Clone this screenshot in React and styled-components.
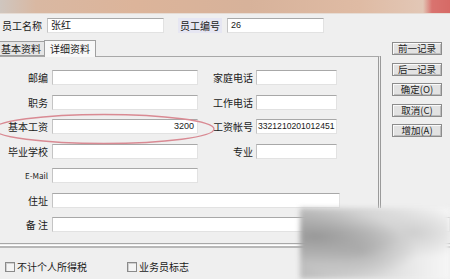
import React from "react";
import styled, { createGlobalStyle } from "styled-components";

const Global = createGlobalStyle`
  html, body { margin: 0; padding: 0; }
  body {
    background: #efefef;
    font-family: "Noto Sans CJK SC", "DejaVu Sans", sans-serif;
    font-size: 10px;
    color: #1a1a1a;
    overflow: hidden;
  }
`;

const Window = styled.div`
  position: relative;
  width: 450px;
  height: 279px;
  overflow: hidden;
  background: #efefef;
`;

const TitleBar = styled.div`
  height: 13px;
  background: linear-gradient(90deg, #cfc6bf 0%, #d9b8a2 8%, #dcb49a 30%, #d7b29a 55%, #dfbba4 80%, #e2c7b6 94%, #d9736f 96%, #d66a66 100%);
  border-bottom: 1px solid #e6dcd4;
  filter: blur(0.6px);
`;

const HeaderRow = styled.div`
  display: flex;
  align-items: center;
  height: 15px;
  margin-top: 4px;
  padding-left: 2px;
`;

const HeaderLabel = styled.span`
  line-height: 15px;
  margin-right: ${(p) => p.$gap || 4}px;
  margin-left: ${(p) => p.$left || 0}px;
  padding: 0 ${(p) => (p.$tint ? 2 : 0)}px;
  background: ${(p) => (p.$tint ? "#e6e6f2" : "transparent")};
  white-space: nowrap;
`;

const Field = styled.div`
  box-sizing: border-box;
  width: ${(p) => p.$w}px;
  height: 15px;
  background: #fff;
  border-top: 1px solid #a8a8a8;
  border-left: 1px solid #c4c4c4;
  border-right: 1px solid #e2e2e2;
  border-bottom: 1px solid #e2e2e2;
  font-family: "Liberation Sans", "Noto Sans CJK SC", sans-serif;
  font-size: ${(p) => p.$size || 10}px;
  line-height: 13px;
  padding: 0 ${(p) => (p.$tight ? 1 : 3)}px;
  text-align: ${(p) => (p.$right ? "right" : "left")};
  white-space: nowrap;
  overflow: hidden;
  flex-shrink: 0;
`;

const Main = styled.div`
  display: flex;
  margin-top: 6px;
`;

const Left = styled.div`
  width: 381px;
  flex-shrink: 0;
`;

const Tabs = styled.div`
  display: flex;
  align-items: flex-end;
  height: 17px;
  margin-left: -3px;
`;

const Tab = styled.div`
  box-sizing: border-box;
  height: ${(p) => (p.$active ? 17 : 15)}px;
  padding: 0 ${(p) => (p.$active ? 5 : 3)}px;
  line-height: ${(p) => (p.$active ? 15 : 13)}px;
  background: ${(p) => (p.$active ? "#f8f8f8" : "#e6e6e6")};
  border: 1px solid #a0a0a0;
  border-bottom: ${(p) => (p.$active ? "none" : "1px solid #a0a0a0")};
  margin-left: ${(p) => (p.$active ? -1 : 0)}px;
  margin-bottom: ${(p) => (p.$active ? -1 : 0)}px;
  position: relative;
  z-index: ${(p) => (p.$active ? 2 : 1)};
`;

const Panel = styled.div`
  box-sizing: border-box;
  height: 152px;
  border-top: 1px solid #a8a8a8;
  border-right: 3px double #9a9a9a;
  padding-top: 13px;
  display: flex;
  flex-direction: column;
  gap: 9.5px;
`;

const Row = styled.div`
  display: flex;
  align-items: center;
  height: 15px;
`;

const Label = styled.span`
  box-sizing: border-box;
  width: ${(p) => p.$w}px;
  padding-right: ${(p) => p.$pad ?? 4}px;
  text-align: right;
  white-space: nowrap;
  line-height: 15px;
  font-size: ${(p) => p.$size || 10}px;
  flex-shrink: 0;
`;

const Buttons = styled.div`
  display: flex;
  flex-direction: column;
  gap: 7.5px;
  padding-top: 3px;
  margin-left: 11px;
`;

const Button = styled.div`
  box-sizing: border-box;
  width: 50px;
  height: 13px;
  background: #e2e2e2;
  border: 1px solid #8c8c8c;
  box-shadow: inset 1px 1px 0 #fafafa, inset -1px -1px 0 #bdbdbd;
  font-size: 9.5px;
  line-height: 11px;
  text-align: center;
  color: #222;
`;

const NoteRow = styled(Row)`
  margin-top: 9px;
`;

const Separator = styled.div`
  margin-top: 11px;
  height: 1px;
  border-top: 1px solid #a8a8a8;
  border-bottom: 1px solid #fff;
  box-shadow: 0 2px 0 #b8b8b8;
`;

const Checks = styled.div`
  display: flex;
  align-items: center;
  gap: 40px;
  margin-top: 15px;
  padding-left: 5px;
`;

const Check = styled.label`
  display: flex;
  align-items: center;
  gap: 2px;
  font-size: 10px;
  line-height: 12px;
`;

const Box = styled.span`
  box-sizing: border-box;
  width: 10px;
  height: 10px;
  border: 1px solid #8a8a8a;
  background: #f4f4f4;
  box-shadow: inset 1px 1px 0 #cfcfcf;
`;

const Ellipse = styled.svg`
  position: absolute;
  left: -8px;
  top: 112px;
  pointer-events: none;
`;

const Watermark = styled.div`
  position: absolute;
  left: 300px;
  top: 208px;
  width: 150px;
  height: 71px;
  background:
    radial-gradient(ellipse at 10% 40%, rgba(150,150,150,0.95), rgba(150,150,150,0) 45%),
    radial-gradient(ellipse at 40% 60%, rgba(170,170,170,0.8), rgba(170,170,170,0) 45%),
    radial-gradient(ellipse at 75% 35%, rgba(200,200,200,0.8), rgba(200,200,200,0) 40%),
    linear-gradient(90deg, #bdbdbd, #d8d8d8 50%, #ececec 80%, #f6f6f6);
  filter: blur(2.5px);
`;

export default function App() {
  return (
    <Window>
      <Global />
      <TitleBar />
      <HeaderRow>
        <HeaderLabel $gap={5}>员工名称</HeaderLabel>
        <Field $w={117}>张红</Field>
        <HeaderLabel $left={14} $gap={5} $tint>员工编号</HeaderLabel>
        <Field $w={97} $size={9}>26</Field>
      </HeaderRow>
      <Main>
        <Left>
          <Tabs>
            <Tab>基本资料</Tab>
            <Tab $active>详细资料</Tab>
          </Tabs>
          <Panel>
            <Row>
              <Label $w={52}>邮编</Label>
              <Field $w={146} />
              <Label $w={58} $pad={3}>家庭电话</Label>
              <Field $w={81} />
            </Row>
            <Row>
              <Label $w={52}>职务</Label>
              <Field $w={146} />
              <Label $w={58} $pad={3}>工作电话</Label>
              <Field $w={81} />
            </Row>
            <Row>
              <Label $w={52}>基本工资</Label>
              <Field $w={146} $right $size={9}>3200</Field>
              <Label $w={58} $pad={3}>工资帐号</Label>
              <Field $w={81} $size={8.6} $tight>3321210201012451</Field>
            </Row>
            <Row>
              <Label $w={52}>毕业学校</Label>
              <Field $w={146} />
              <Label $w={58} $pad={3}>专业</Label>
              <Field $w={81} />
            </Row>
            <Row>
              <Label $w={52} $size={8}>E-Mail</Label>
              <Field $w={146} />
            </Row>
            <Row>
              <Label $w={52}>住址</Label>
              <Field $w={288} />
            </Row>
          </Panel>
        </Left>
        <Buttons>
          <Button>前一记录</Button>
          <Button>后一记录</Button>
          <Button>确定(O)</Button>
          <Button>取消(C)</Button>
          <Button>增加(A)</Button>
        </Buttons>
      </Main>
      <NoteRow>
        <Label $w={52}>备 注</Label>
        <Field $w={398} />
      </NoteRow>
      <Separator />
      <Checks>
        <Check><Box />不计个人所得税</Check>
        <Check><Box />业务员标志</Check>
      </Checks>
      <Ellipse width="224" height="34" viewBox="0 0 224 34">
        <ellipse cx="112" cy="17" rx="110" ry="14.5" fill="none" stroke="#d98a93" strokeWidth="1.3" />
      </Ellipse>
      <Watermark />
    </Window>
  );
}
